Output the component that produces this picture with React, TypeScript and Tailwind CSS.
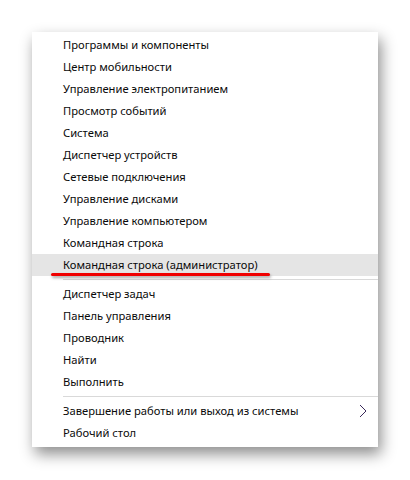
import React from 'react';

const groups: string[][] = [
  [
    'Программы и компоненты',
    'Центр мобильности',
    'Управление электропитанием',
    'Просмотр событий',
    'Система',
    'Диспетчер устройств',
    'Сетевые подключения',
    'Управление дисками',
    'Управление компьютером',
    'Командная строка',
    'Командная строка (администратор)',
  ],
  ['Диспетчер задач', 'Панель управления', 'Проводник', 'Найти', 'Выполнить'],
  ['Завершение работы или выход из системы', 'Рабочий стол'],
];

function Chevron() {
  return (
    <svg width="8" height="14" viewBox="0 0 8 14" className="absolute right-[11px] top-[4px]">
      <path d="M1 1 L7 7 L1 13" fill="none" stroke="#3a2a5a" strokeWidth="1" />
    </svg>
  );
}

export default function App() {
  return (
    <div className="w-[410px] h-[480px] bg-white pl-[32px] pt-[32px] font-['Noto_Sans',sans-serif]">
      <div className="w-[346px] bg-white pt-[2px] pb-[3px] shadow-[3px_7px_14px_rgba(0,0,0,0.45)]">
        {groups.map((items, gi) => (
          <div key={gi}>
            {gi > 0 && (
              <div className="py-[3px] pl-[31px]">
                <div className="h-px bg-[#d9d9d9]" />
              </div>
            )}
            {items.map((label) => {
              const active = label === 'Командная строка (администратор)';
              const sub = label.startsWith('Завершение');
              return (
                <div
                  key={label}
                  className={`relative h-[22px] flex items-center pl-[31px] text-[11.2px] text-[#0a0a0a] ${active ? 'bg-[#e5e5e5]' : ''}`}
                >
                  {label}
                  {active && (
                    <span className="absolute left-[19px] top-[19px] w-[219px] h-[3px] rounded-full bg-[#f00000] shadow-[1px_2px_3px_rgba(0,0,0,0.35)]" />
                  )}
                  {sub && <Chevron />}
                </div>
              );
            })}
          </div>
        ))}
      </div>
    </div>
  );
}
